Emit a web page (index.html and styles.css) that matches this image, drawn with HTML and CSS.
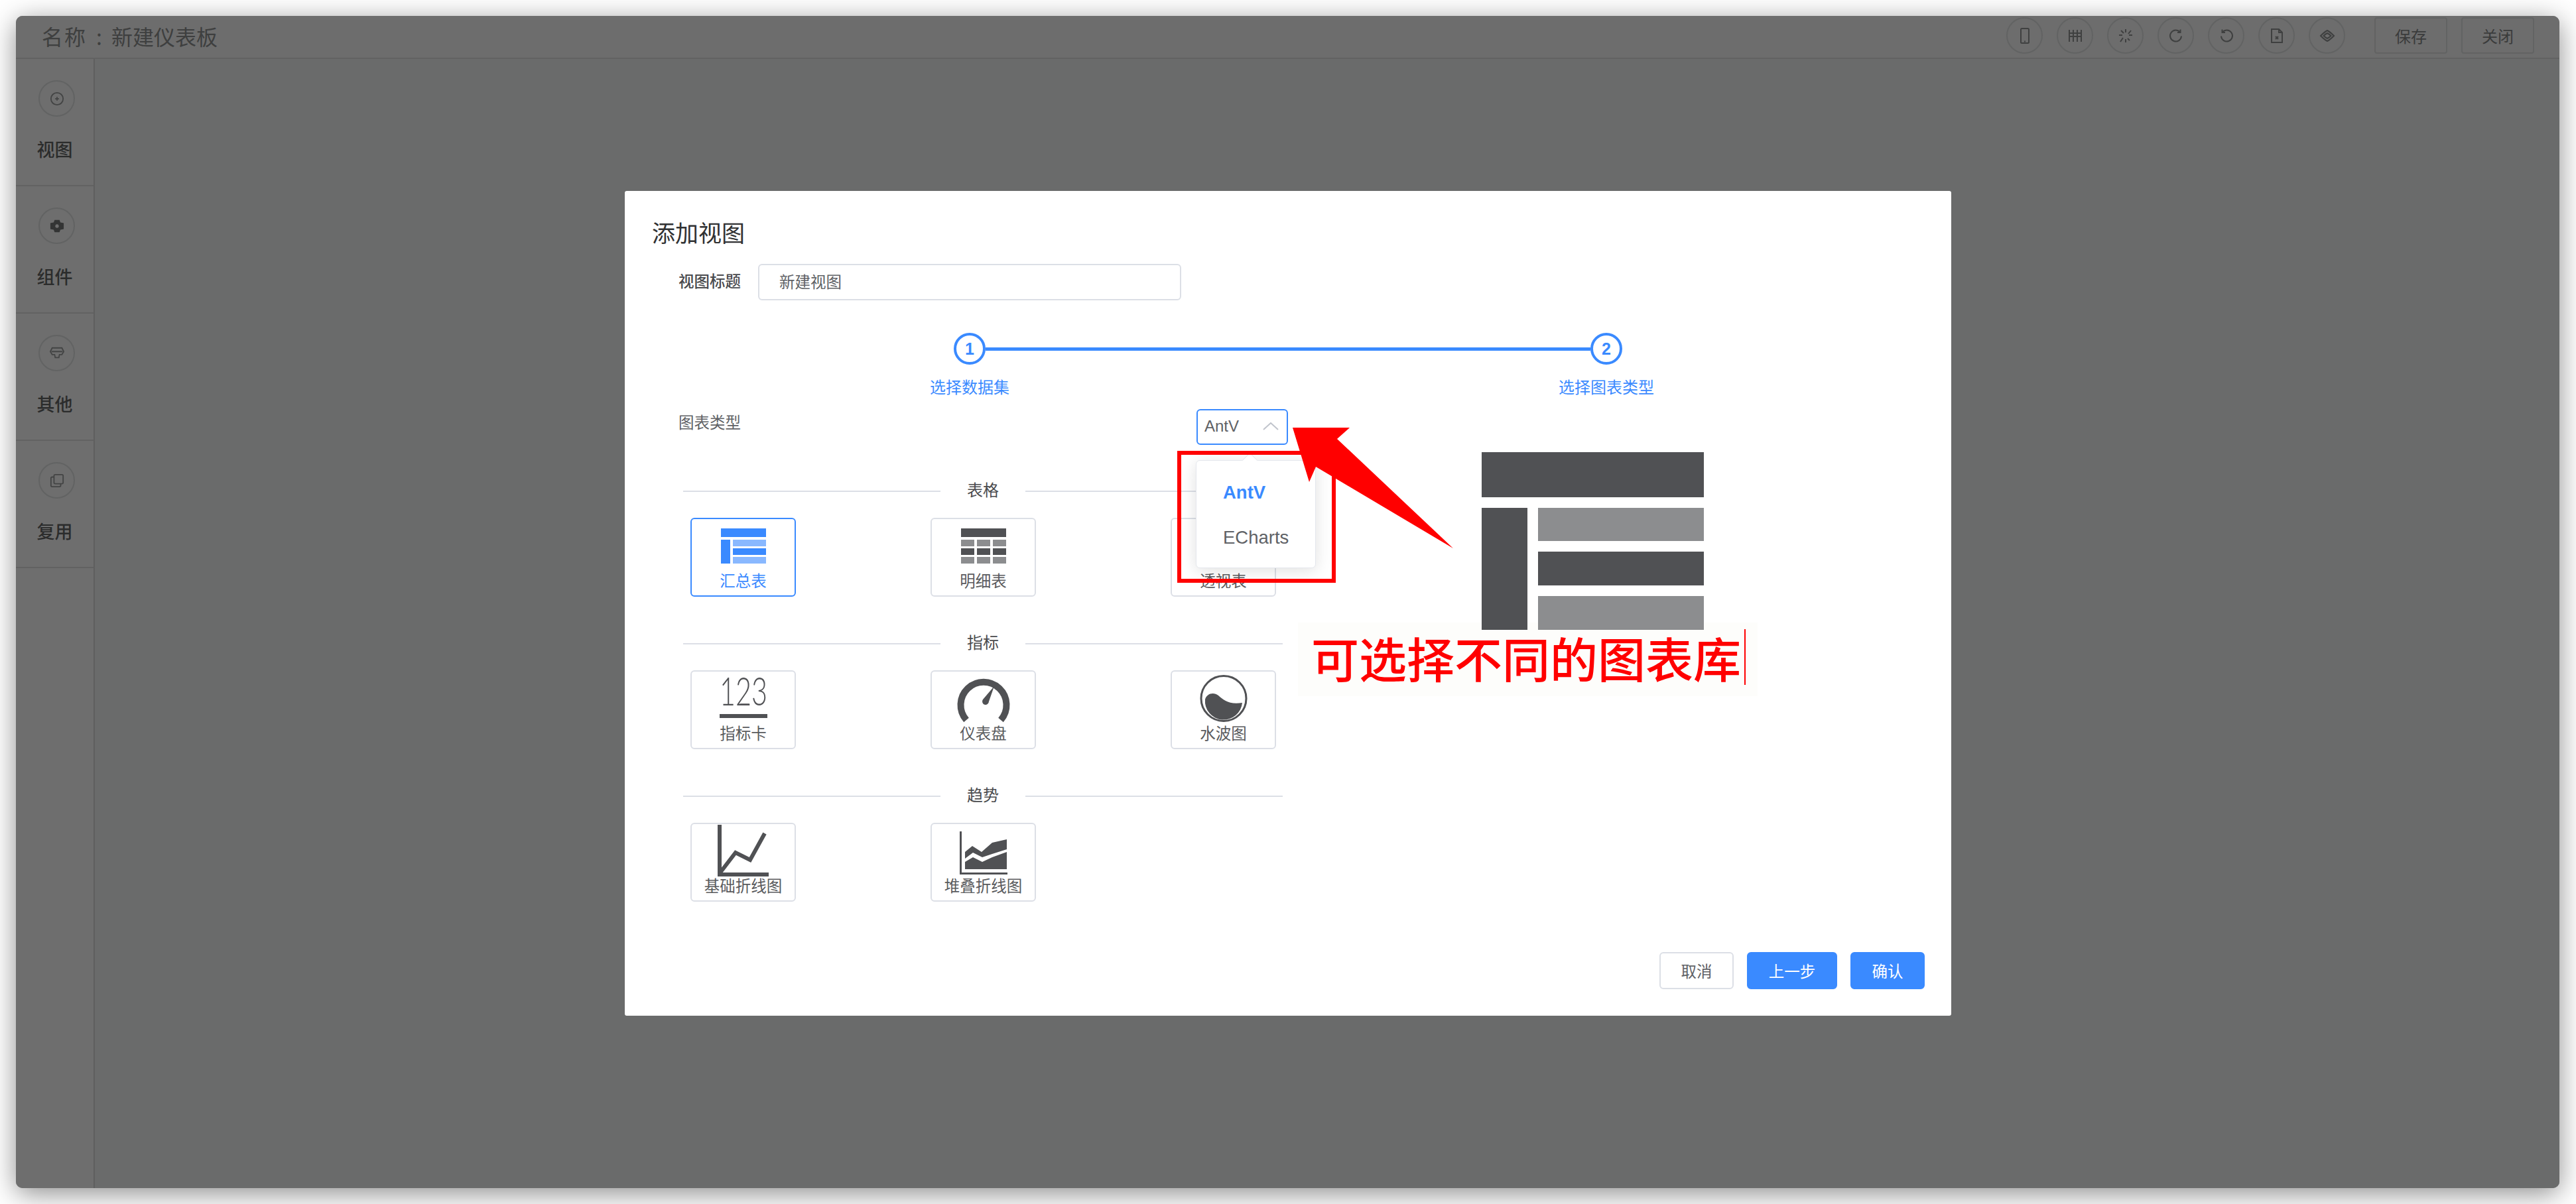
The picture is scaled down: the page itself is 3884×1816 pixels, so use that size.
FILE: index.html
```html
<!DOCTYPE html>
<html lang="zh-CN">

<head>
    <meta charset="UTF-8">
    <title>添加视图</title>
    <link rel="stylesheet" href="styles.css">
</head>

<body>

    <section class="window">

        <header class="topbar">
            <div class="doc-title"><span class="doc-key">名称</span><span class="doc-colon">:</span><span>新建仪表板</span></div>
            <div class="topbar-tools">
                <span class="tool"><svg viewBox="0 0 24 24"><rect x="6" y="1" width="12" height="22" rx="1.5"/><path d="M11 20.500h2"/></svg></span>
                <span class="tool"><svg viewBox="0 0 24 24"><path d="M3 3v18M21 3v18M3 8h18M3 13h18M9 3v18M15 3v18"/></svg></span>
                <span class="tool"><svg viewBox="0 0 24 24"><path d="M12 2v5M12 17v5M5 4l4 4M15 16l3 3M2 11h5M17 11h5M8 15l-4 6M16 9l4-5"/></svg></span>
                <span class="tool"><svg viewBox="0 0 24 24"><path d="M18 6.500a8.500 8.500 0 1 0 2 6M18.500 2.500v4.500h-4.500"/></svg></span>
                <span class="tool"><svg viewBox="0 0 24 24"><path d="M6 6.500a8.500 8.500 0 1 1-2 6M5.500 2.500v4.500h4.500"/></svg></span>
                <span class="tool"><svg viewBox="0 0 24 24"><path d="M4 2h11l5 5v15H4zM15 2v5h5M10 13l4 4M14 13l-4 4"/></svg></span>
                <span class="tool"><svg viewBox="0 0 24 24"><path d="M12 4c4 2 7 5 10 8-3 3-6 6-10 8-4-2-7-5-10-8 3-3 6-6 10-8zM12 8c2 1 4 2.500 5.500 4-1.500 1.500-3.500 3-5.500 4-2-1-4-2.500-5.500-4C8 10.500 10 9 12 8z"/></svg></span>
                <button class="top-btn top-btn-first">保存</button>
                <button class="top-btn">关闭</button>
            </div>
        </header>

        <div class="workspace">
            <aside class="sidebar">
                <div class="side-item">
                    <span class="side-icon"><svg viewBox="0 0 24 24"><circle cx="12" cy="12" r="10"/><path d="M12 9v6M9 12h6"/></svg></span>
                    <span class="side-label">视图</span>
                </div>
                <div class="side-item">
                    <span class="side-icon"><svg viewBox="0 0 24 24"><path class="solid" d="M8 2h8l1.500 4 5.500 1v10l-5.500 1-1.500 4H8l-1.500-4L1 17V7l5.500-1zM12 9a3 3 0 1 0 .01 0z"/></svg></span>
                    <span class="side-label">组件</span>
                </div>
                <div class="side-item">
                    <span class="side-icon"><svg viewBox="0 0 24 24"><path d="M4 3h16l3 6-3 5h-4l-1 5H9l-1-5H4L1 9zM3 9h18"/></svg></span>
                    <span class="side-label">其他</span>
                </div>
                <div class="side-item">
                    <span class="side-icon"><svg viewBox="0 0 24 24"><rect x="7" y="2" width="15" height="15" rx="2"/><path d="M7 6H4a2 2 0 0 0-2 2v12a2 2 0 0 0 2 2h12a2 2 0 0 0 2-2v-3"/></svg></span>
                    <span class="side-label">复用</span>
                </div>
            </aside>
            <main class="canvas"></main>
        </div>

        <div class="modal">
            <h2 class="modal-title">添加视图</h2>

            <div class="modal-body">
                <div class="form-row">
                    <label class="form-label form-label-strong">视图标题</label>
                    <div class="text-input">新建视图</div>
                </div>

                <div class="steps">
                    <div class="step-track">
                        <span class="step-dot">1</span>
                        <span class="step-line"></span>
                        <span class="step-dot">2</span>
                    </div>
                    <div class="step-labels">
                        <span>选择数据集</span>
                        <span>选择图表类型</span>
                    </div>
                </div>

                <div class="type-row">
                    <label class="form-label">图表类型</label>
                    <div class="select-wrap">
                        <div class="select-box">
                            <span>AntV</span>
                            <svg class="chevron" viewBox="0 0 24 12"><path d="M1 11L12 1l11 10"/></svg>
                        </div>
                        <ul class="select-menu">
                            <li class="select-on">AntV</li>
                            <li>ECharts</li>
                        </ul>
                    </div>
                </div>

                <div class="chart-group">
                    <div class="group-head"><span>表格</span></div>
                    <div class="group-cards">
                        <div class="chart-card chart-card-on">
                            <div class="chart-icon">
                                <svg class="ico-table" viewBox="0 0 68 53">
                                    <rect class="c-blue" width="68" height="13"/>
                                    <rect class="c-blue" y="17" width="14" height="36"/>
                                    <rect class="c-blue-l" x="18" y="17" width="50" height="10"/>
                                    <rect class="c-blue" x="18" y="30" width="50" height="10"/>
                                    <rect class="c-blue-l" x="18" y="43" width="50" height="10"/>
                                </svg>
                            </div>
                            <span>汇总表</span>
                        </div>
                        <div class="chart-card">
                            <div class="chart-icon">
                                <svg class="ico-table" viewBox="0 0 68 53">
                                    <rect class="c-dark" width="68" height="13"/>
                                    <g class="c-light"><rect y="17" width="20" height="10"/><rect x="24" y="17" width="20" height="10"/><rect x="48" y="17" width="20" height="10"/></g>
                                    <g class="c-dark"><rect y="30" width="20" height="10"/><rect x="24" y="30" width="20" height="10"/><rect x="48" y="30" width="20" height="10"/></g>
                                    <g class="c-light"><rect y="43" width="20" height="10"/><rect x="24" y="43" width="20" height="10"/><rect x="48" y="43" width="20" height="10"/></g>
                                </svg>
                            </div>
                            <span>明细表</span>
                        </div>
                        <div class="chart-card">
                            <div class="chart-icon"></div>
                            <span>透视表</span>
                        </div>
                    </div>
                </div>

                <div class="chart-group">
                    <div class="group-head"><span>指标</span></div>
                    <div class="group-cards">
                        <div class="chart-card">
                            <div class="chart-icon">
                                <svg class="ico-kpi" viewBox="0 0 72 62">
                                    <text x="0" y="42" textLength="72" lengthAdjust="spacingAndGlyphs">123</text>
                                    <rect class="c-dark" y="55" width="72" height="6"/>
                                </svg>
                            </div>
                            <span>指标卡</span>
                        </div>
                        <div class="chart-card">
                            <div class="chart-icon">
                                <svg class="ico-gauge" viewBox="0 0 78 71">
                                    <path class="gauge-arc" d="M13 68A34.500 34.500 0 1 1 65 68"/>
                                    <path class="c-dark" d="M55 17L47 40a5 5 0 1 1-9-3z"/>
                                </svg>
                            </div>
                            <span>仪表盘</span>
                        </div>
                        <div class="chart-card">
                            <div class="chart-icon">
                                <svg class="ico-gauge" viewBox="0 0 72 71">
                                    <circle class="water-ring" cx="36" cy="35.500" r="34"/>
                                    <path class="c-dark" d="M8 37C10 28 21 25 28 31C36 38 44 45 64 42A28 28 0 0 1 8 37z"/>
                                </svg>
                            </div>
                            <span>水波图</span>
                        </div>
                    </div>
                </div>

                <div class="chart-group">
                    <div class="group-head"><span>趋势</span></div>
                    <div class="group-cards">
                        <div class="chart-card">
                            <div class="chart-icon">
                                <svg class="ico-line" viewBox="0 0 77 78">
                                    <path class="c-dark" d="M0 0h6v72h71v6H0z"/>
                                    <path class="line-stroke" d="M4 72L27 42l22 11L71 13"/>
                                </svg>
                            </div>
                            <span>基础折线图</span>
                        </div>
                        <div class="chart-card">
                            <div class="chart-icon">
                                <svg class="ico-stack" viewBox="0 0 72 65">
                                    <path class="c-dark" d="M0 0h3v62h69v3H0z"/>
                                    <path class="c-dark" d="M8 31L19 22l14 9 16-14 22-5v15L49 34l-15 5-14-7-12 9z"/>
                                    <path class="c-dark" d="M8 46L20 39l14 7 15-7 22-8v26H8z"/>
                                </svg>
                            </div>
                            <span>堆叠折线图</span>
                        </div>
                    </div>
                </div>
            </div>

            <div class="modal-foot">
                <button class="foot-btn">取消</button>
                <button class="foot-btn foot-btn-main foot-btn-wide">上一步</button>
                <button class="foot-btn foot-btn-main">确认</button>
            </div>
        </div>

    </section>

    <!-- annotations drawn on top of the screenshot -->
    <div class="note-box"></div>
    <svg class="note-arrow" viewBox="0 0 260 200"><polygon points="9,5 95,5 76,22 251,187 44,64 34,87"/></svg>
    <div class="note-caption"><span>可选择不同的图表库</span></div>
    <svg class="note-preview" viewBox="0 0 335 268">
        <rect class="c-dark" width="335" height="68"/>
        <rect class="c-dark" y="84" width="69" height="184"/>
        <rect class="c-light" x="85" y="84" width="250" height="50"/>
        <rect class="c-dark" x="85" y="150" width="250" height="51"/>
        <rect class="c-light" x="85" y="217" width="250" height="51"/>
    </svg>

</body>

</html>
```

FILE: styles.css
```css
* {
    box-sizing: border-box;
}

html, body {
    margin: 0;
    height: 100%;
}

body {
    width: 3884px;
    height: 1816px;
    position: relative;
    overflow: hidden;
    background: #fff;
    font-family: "Noto Sans CJK SC", "Liberation Sans", sans-serif;
    font-size: 24px;
    color: #606266;
    padding: 24px 25px 24px 24px;
}

button {
    font: inherit;
    background: none;
    padding: 0;
}

/* dimmed window behind the dialog */

.window {
    position: relative;
    height: 1768px;
    border-radius: 10px;
    background: #6b6c6c;
    box-shadow: 0 8px 40px rgba(0, 0, 0, 0.45);
    display: flex;
    flex-direction: column;
    overflow: hidden;
}

.topbar {
    height: 65px;
    flex: none;
    display: flex;
    align-items: center;
    justify-content: space-between;
    padding: 0 38px 4px 39px;
    background: #6d6d6d;
    border-bottom: 2px solid #626262;
}

.doc-title {
    font-size: 32px;
    line-height: 40px;
    color: #3e3f3f;
}

.doc-key {
    letter-spacing: 2px;
}

.doc-colon {
    margin: 0 14px 0 14px;
}

.topbar-tools {
    display: flex;
    align-items: center;
    gap: 21px;
}

.tool {
    width: 55px;
    height: 55px;
    border-radius: 50%;
    border: 2px solid #626363;
    display: flex;
    align-items: center;
    justify-content: center;
}

.tool svg {
    width: 24px;
    height: 24px;
    fill: none;
    stroke: #3f4040;
    stroke-width: 2;
}

.top-btn {
    width: 110px;
    height: 55px;
    border: 2px solid #626363;
    border-radius: 4px;
    color: #3a3b3b;
    font-size: 24px;
}

.top-btn-first {
    margin-left: 23px;
}

.workspace {
    flex: 1;
    display: flex;
}

.sidebar {
    width: 119px;
    flex: none;
    background: #6e6e6e;
    border-right: 2px solid #5f5f5f;
}

.side-item {
    height: 192px;
    padding-top: 32px;
    border-bottom: 2px solid #626262;
    display: flex;
    flex-direction: column;
    align-items: center;
}

.side-icon {
    width: 55px;
    height: 55px;
    margin-left: 6px;
    border-radius: 50%;
    border: 2px solid #626363;
    display: flex;
    align-items: center;
    justify-content: center;
}

.side-icon svg {
    width: 22px;
    height: 22px;
    fill: none;
    stroke: #434444;
    stroke-width: 2;
}

.side-icon .solid {
    fill: #333434;
    fill-rule: evenodd;
    stroke: none;
}

.side-label {
    margin-top: 34px;
    font-size: 27px;
    font-weight: 500;
    line-height: 30px;
    color: #2b2c2c;
}

.canvas {
    flex: 1;
    background: #6a6b6b;
}

/* dialog */

.modal {
    position: absolute;
    left: 918px;
    top: 264px;
    width: 2000px;
    height: 1244px;
    background: #fff;
    border-radius: 3px;
    display: flex;
    flex-direction: column;
}

.modal-title {
    margin: 37px 0 23px 41px;
    font-size: 35px;
    font-weight: 400;
    line-height: 50px;
    color: #303133;
}

.modal-body {
    padding-left: 81px;
}

.form-row {
    display: flex;
    align-items: center;
}

.form-label {
    width: 120px;
    flex: none;
    line-height: 30px;
    font-size: 23.500px;
}

.form-label-strong {
    margin-top: -5px;
    font-weight: 500;
    color: #4a4b4e;
}

.text-input {
    width: 638px;
    height: 55px;
    border: 2px solid #dcdfe6;
    border-radius: 6px;
    padding-left: 30px;
    line-height: 48px;
    font-size: 23.500px;
}

.steps {
    margin: 49px 0 0 339px;
    width: 1160px;
}

.step-track {
    display: flex;
    align-items: center;
    padding: 0 76px;
}

.step-dot {
    width: 48px;
    height: 48px;
    flex: none;
    border: 4px solid #3a8aff;
    border-radius: 50%;
    color: #3a8aff;
    font-weight: 700;
    font-family: "Liberation Sans", sans-serif;
    font-size: 25px;
    text-align: center;
    line-height: 40px;
}

.step-line {
    flex: 1;
    height: 5px;
    background: #3a8aff;
}

.step-labels {
    display: flex;
    justify-content: space-between;
    margin-top: 18px;
    color: #3a8aff;
    line-height: 30px;
}

.step-labels span {
    width: 200px;
    text-align: center;
}

.type-row {
    display: flex;
    margin-top: 19px;
}

.type-row .form-label {
    width: 781px;
    margin-top: 4px;
}

.select-wrap {
    position: relative;
}

.select-box {
    width: 138px;
    height: 54px;
    border: 2px solid #3a8aff;
    border-radius: 6px;
    padding: 0 12px 3px 10px;
    display: flex;
    align-items: center;
    justify-content: space-between;
    font-family: "Liberation Sans", sans-serif;
    font-size: 24px;
}

.chevron {
    width: 24px;
    height: 12px;
    fill: none;
    stroke: #c0c4cc;
    stroke-width: 2;
}

.select-menu {
    position: absolute;
    left: -1px;
    top: 77px;
    z-index: 2;
    width: 181px;
    height: 163px;
    margin: 0;
    padding: 14px 0;
    list-style: none;
    background: #fff;
    border: 1px solid #e4e7ed;
    border-radius: 6px;
    box-shadow: 0 4px 24px rgba(0, 0, 0, 0.12);
    font-family: "Liberation Sans", sans-serif;
    font-size: 27.500px;
}

.select-menu::before {
    content: "";
    position: absolute;
    left: 72px;
    top: -9px;
    width: 16px;
    height: 16px;
    background: #fff;
    border-left: 1px solid #e4e7ed;
    border-top: 1px solid #e4e7ed;
    transform: rotate(45deg);
}

.select-menu li {
    height: 68px;
    line-height: 68px;
    padding-left: 40px;
}

.select-menu .select-on {
    color: #3a8aff;
    font-weight: 700;
}

.chart-group {
    margin-left: 7px;
    width: 904px;
    height: 230px;
}

.type-row + .chart-group {
    margin-top: 50px;
}

.group-head {
    height: 40px;
    display: flex;
    align-items: center;
    color: #4a4b4e;
}

.group-head::before,
.group-head::after {
    content: "";
    flex: 1;
    height: 2px;
    background: #dcdfe6;
}

.group-head span {
    width: 128px;
    padding-bottom: 8px;
    text-align: center;
}

.group-cards {
    margin-top: 20px;
    padding-left: 11px;
    display: grid;
    grid-template-columns: repeat(3, 362px);
}

.chart-card {
    width: 159px;
    height: 119px;
    border: 2px solid #dcdfe6;
    border-radius: 6px;
    display: flex;
    flex-direction: column;
    align-items: center;
    line-height: 30px;
    color: #5a5b5e;
    font-size: 23.500px;
}

.chart-card-on {
    border-color: #3a8aff;
    color: #3a8aff;
}

.chart-card > span {
    margin-top: -3px;
}

.chart-icon {
    width: 100%;
    height: 80px;
    flex: none;
    display: flex;
    align-items: center;
    justify-content: center;
}

.chart-icon svg {
    display: block;
    overflow: visible;
}

.ico-table {
    width: 68px;
    height: 53px;
}

.ico-kpi {
    width: 72px;
    height: 62px;
}

.ico-kpi text {
    font-family: "Lato", sans-serif;
    font-weight: 300;
    font-size: 60px;
    fill: #505154;
}

.ico-gauge {
    width: 78px;
    height: 71px;
}

.ico-line {
    width: 77px;
    height: 78px;
}

.ico-stack {
    width: 72px;
    height: 65px;
    margin-top: 6px;
}

.c-blue {
    fill: #3a8aff;
}

.c-blue-l {
    fill: #89b8ff;
}

.c-dark {
    fill: #505154;
}

.c-light {
    fill: #8c8d8f;
}

.gauge-arc {
    fill: none;
    stroke: #505154;
    stroke-width: 10;
}

.water-ring {
    fill: none;
    stroke: #505154;
    stroke-width: 3;
}

.line-stroke {
    fill: none;
    stroke: #505154;
    stroke-width: 6;
}

.modal-foot {
    margin-top: auto;
    padding: 0 40px 40px 0;
    display: flex;
    justify-content: flex-end;
    gap: 20px;
}

.foot-btn {
    width: 112px;
    height: 56px;
    border: 2px solid #dcdfe6;
    border-radius: 6px;
    color: #606266;
    font-size: 23.500px;
}

.foot-btn-main {
    background: #3a8aff;
    border-color: #3a8aff;
    color: #fff;
}

.foot-btn-wide {
    width: 136px;
}

/* annotations */

.note-box {
    position: absolute;
    left: 1775px;
    top: 680px;
    width: 239px;
    height: 199px;
    border: 6px solid #f00;
    z-index: 3;
}

.note-arrow {
    position: absolute;
    left: 1940px;
    top: 640px;
    width: 260px;
    height: 200px;
    z-index: 4;
}

.note-arrow polygon {
    fill: #f00;
}

.note-caption {
    position: absolute;
    left: 1957px;
    top: 939px;
    width: 693px;
    height: 111px;
    padding: 10px 0 0 20px;
    background: #fdfdfb;
    color: #f00;
    font-size: 72px;
    font-weight: 500;
    line-height: 84px;
    z-index: 3;
}

.note-caption span {
    display: inline-block;
    padding-right: 5px;
    border-right: 2px solid #f00;
}

.note-preview {
    position: absolute;
    left: 2234px;
    top: 682px;
    width: 335px;
    height: 268px;
    z-index: 4;
}
```
